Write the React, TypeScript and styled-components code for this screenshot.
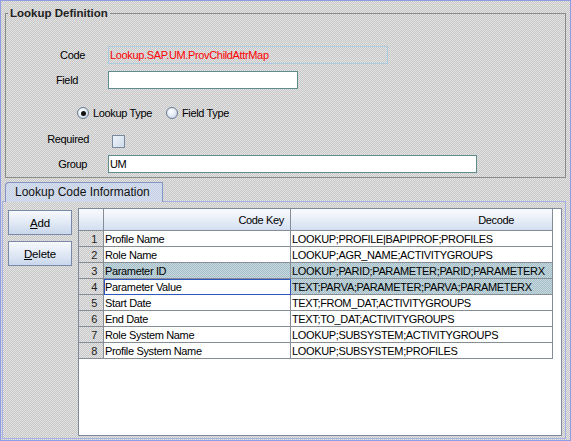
import React from "react";
import styled, { createGlobalStyle, css } from "styled-components";

/* 1px checkerboard: light colour `light`, dark pixels = light - delta.
   Two stripe layers XOR'ed via difference, then differenced against the light colour. */
const dither = (light: string, delta: string) => css`
  background-color: #000;
  background-image: linear-gradient(${light}, ${light}),
    linear-gradient(to bottom, #000 50%, ${delta} 50%),
    linear-gradient(to right, #000 50%, ${delta} 50%);
  background-size: 2px 2px, 2px 2px, 2px 2px;
  background-blend-mode: difference, difference, normal;
`;

const Global = createGlobalStyle`
  html, body { margin: 0; padding: 0; background: #d5d5d5; overflow: hidden; }
  body { font-family: "Liberation Sans", Arial, sans-serif; }
`;

const Frame = styled.div`
  width: 571px;
  height: 441px;
  box-sizing: border-box;
  border: 1px solid #8f9ce4;
  ${dither("#e3e3e3", "#1c1c1c")}
  display: flex;
  flex-direction: column;
  font-family: "Liberation Sans", Arial, sans-serif;
  font-size: 11px;
  letter-spacing: -0.35px;
  color: #000;
  overflow: hidden;
`;

const Group = styled.fieldset`
  margin: 5px 4px 0 4px;
  padding: 0 0 4px 0;
  border: 1px solid #8a8a8a;
  min-width: 0;
  display: flex;
  flex-direction: column;
`;

const Legend = styled.legend`
  margin-left: 2px;
  padding: 0 2px;
  font-weight: bold;
  font-size: 11.5px;
  line-height: 14px;
  letter-spacing: 0;
  color: #222;
`;

const FormRow = styled.div<{ $top: number; $h?: number; $indent?: number }>`
  display: flex;
  align-items: center;
  margin-top: ${(p) => p.$top}px;
  height: ${(p) => p.$h ?? 18}px;
  padding-left: ${(p) => p.$indent ?? 0}px;
`;

const Label = styled.span<{ $pad: number; $top?: boolean }>`
  flex: none;
  width: 102px;
  box-sizing: border-box;
  text-align: right;
  padding-right: ${(p) => p.$pad}px;
  align-self: ${(p) => (p.$top ? "flex-start" : "center")};
  line-height: ${(p) => (p.$top ? "11px" : "13px")};
`;

const TextBox = styled.input<{ $w: number; $ro?: boolean }>`
  width: ${(p) => p.$w}px;
  height: 18px;
  box-sizing: border-box;
  margin: 0;
  padding: 0 1px;
  border: 1px solid ${(p) => (p.$ro ? "#aacbe0" : "#5e8c8c")};
  background: ${(p) => (p.$ro ? "transparent" : "#fff")};
  color: ${(p) => (p.$ro ? "#ff0000" : "#000")};
  font: inherit;
  letter-spacing: inherit;
  outline: none;
`;

const RadioItem = styled.label<{ $gap?: number }>`
  display: flex;
  align-items: center;
  gap: 4px;
  margin-right: ${(p) => p.$gap ?? 0}px;
`;

const RadioDot = styled.span<{ $on?: boolean }>`
  width: 12px;
  height: 12px;
  box-sizing: border-box;
  border-radius: 50%;
  border: 1px solid #6c7a8c;
  background: radial-gradient(circle at 40% 35%, #ffffff 0%, #e4ecf6 45%, #bccde2 100%);
  display: grid;
  place-items: center;
  &::after {
    content: "";
    width: 5px;
    height: 5px;
    border-radius: 50%;
    background: ${(p) => (p.$on ? "#111" : "transparent")};
  }
`;

const Check = styled.span`
  width: 13px;
  height: 13px;
  box-sizing: border-box;
  margin-left: 4px;
  border: 1px solid #7a8a9c;
  background: linear-gradient(135deg, #eef3f9 0%, #cfdcec 100%);
`;

const TabStrip = styled.div`
  display: flex;
  margin-top: 4px;
  padding-left: 4px;
`;

const Tab = styled.div`
  position: relative;
  z-index: 1;
  width: 158px;
  height: 20px;
  margin-bottom: -1px;
  box-sizing: border-box;
  border: 1px solid #8494c4;
  border-bottom: none;
  border-top-left-radius: 4px;
  ${dither("#d8e1f1", "#141210")}
  font-size: 12px;
  letter-spacing: 0;
  line-height: 18px;
  padding-left: 9px;
  color: #111;
`;

const Panel = styled.div`
  flex: 1;
  min-height: 0;
  margin: 0 4px 1px 1px;
  border: 1px solid #a2b0e6;
  display: flex;
  padding: 6px 3px 2px 5px;
`;

const ButtonCol = styled.div`
  display: flex;
  flex-direction: column;
  gap: 6px;
  margin-top: 2px;
  flex: none;
  width: 64px;
`;

const Button = styled.button`
  width: 64px;
  height: 25px;
  box-sizing: border-box;
  margin: 0;
  padding: 0;
  border: 1px solid #7a89a8;
  background: linear-gradient(#f6f8fc 0%, #e4ebf6 45%, #c9d7ec 100%);
  font: inherit;
  font-size: 11.5px;
  letter-spacing: -0.2px;
  color: #000;
  u { text-decoration: underline; }
`;

const Pane = styled.div`
  flex: 1;
  margin-left: 6px;
  border: 1px solid #7d8a99;
  background: #fff;
  display: flex;
  flex-direction: column;
`;

const GridRow = styled.div<{ $h: number }>`
  display: grid;
  grid-template-columns: 25px 187px 262px;
  height: ${(p) => p.$h}px;
`;

const cellBase = css`
  box-sizing: border-box;
  border-right: 1px solid #878d97;
  border-bottom: 1px solid #878d97;
  white-space: nowrap;
  overflow: hidden;
  display: flex;
  align-items: center;
`;

const HeadCell = styled.div<{ $pr?: number }>`
  ${cellBase}
  justify-content: flex-end;
  padding-right: ${(p) => p.$pr ?? 0}px;
  background: linear-gradient(#f7f9fd 0%, #eef3fa 35%, #d2def0 100%);
`;

const NumCell = styled.div`
  ${cellBase}
  justify-content: flex-end;
  padding-right: 6px;
  ${dither("#e4e4e4", "#1c1c1c")}
  color: #222;
`;

const DataCell = styled.div<{ $sel?: boolean; $focus?: boolean }>`
  ${cellBase}
  padding-left: 1px;
  ${(p) => (p.$sel && !p.$focus ? dither("#c7d7dd", "#231714") : "background: #fff;")}
  ${(p) =>
    p.$focus &&
    css`
      outline: 1px solid #3054c0;
      outline-offset: -1px;
    `}
`;

const rows: [string, string][] = [
  ["Profile Name", "LOOKUP;PROFILE|BAPIPROF;PROFILES"],
  ["Role Name", "LOOKUP;AGR_NAME;ACTIVITYGROUPS"],
  ["Parameter ID", "LOOKUP;PARID;PARAMETER;PARID;PARAMETERX"],
  ["Parameter Value", "TEXT;PARVA;PARAMETER;PARVA;PARAMETERX"],
  ["Start Date", "TEXT;FROM_DAT;ACTIVITYGROUPS"],
  ["End Date", "TEXT;TO_DAT;ACTIVITYGROUPS"],
  ["Role System Name", "LOOKUP;SUBSYSTEM;ACTIVITYGROUPS"],
  ["Profile System Name", "LOOKUP;SUBSYSTEM;PROFILES"],
];

const selected = new Set([2, 3]);
const focused = 3;

export default function App() {
  return (
    <Frame>
      <Global />
      <Group>
        <Legend>Lookup Definition</Legend>
        <FormRow $top={26}>
          <Label $pad={23}>Code</Label>
          <TextBox $w={280} $ro readOnly value="Lookup.SAP.UM.ProvChildAttrMap" />
        </FormRow>
        <FormRow $top={7}>
          <Label $pad={30}>Field</Label>
          <TextBox $w={190} readOnly value="" />
        </FormRow>
        <FormRow $top={16} $h={16} $indent={71}>
          <RadioItem $gap={14}>
            <RadioDot $on />
            <span>Lookup Type</span>
          </RadioItem>
          <RadioItem>
            <RadioDot />
            <span>Field Type</span>
          </RadioItem>
        </FormRow>
        <FormRow $top={13} $h={14}>
          <Label $pad={19} $top>
            Required
          </Label>
          <Check />
        </FormRow>
        <FormRow $top={7}>
          <Label $pad={21}>Group</Label>
          <TextBox $w={369} readOnly value="UM" />
        </FormRow>
      </Group>
      <TabStrip>
        <Tab>Lookup Code Information</Tab>
      </TabStrip>
      <Panel>
        <ButtonCol>
          <Button>
            <u>A</u>dd
          </Button>
          <Button>
            <u>D</u>elete
          </Button>
        </ButtonCol>
        <Pane>
          <GridRow $h={22}>
            <HeadCell />
            <HeadCell $pr={6}>Code Key</HeadCell>
            <HeadCell $pr={38}>Decode</HeadCell>
          </GridRow>
          {rows.map(([key, decode], i) => (
            <GridRow $h={16} key={key}>
              <NumCell>{i + 1}</NumCell>
              <DataCell $sel={selected.has(i)} $focus={i === focused}>
                {key}
              </DataCell>
              <DataCell $sel={selected.has(i)}>{decode}</DataCell>
            </GridRow>
          ))}
        </Pane>
      </Panel>
    </Frame>
  );
}
